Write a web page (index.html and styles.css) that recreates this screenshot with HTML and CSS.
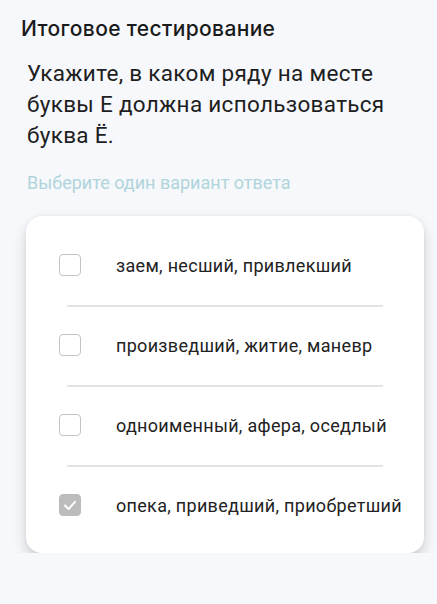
FILE: index.html
```html
<!DOCTYPE html>
<html lang="ru">
<head>
    <meta charset="UTF-8">
    <meta name="viewport" content="width=device-width, initial-scale=1.0">
    <title>Итоговое тестирование</title>
    <link rel="stylesheet" href="styles.css">
</head>
<body>
    <div class="page">
        <h1 class="title">Итоговое тестирование</h1>
        <p class="question">Укажите, в каком ряду на месте буквы Е должна использоваться буква Ё.</p>
        <p class="hint">Выберите один вариант ответа</p>

        <div class="card">
            <label class="option">
                <span class="box"></span>
                <span class="text">заем, несший, привлекший</span>
            </label>
            <label class="option">
                <span class="box"></span>
                <span class="text">произведший, житие, маневр</span>
            </label>
            <label class="option">
                <span class="box"></span>
                <span class="text">одноименный, афера, оседлый</span>
            </label>
            <label class="option">
                <span class="box checked">
                    <svg viewBox="0 0 22 22" width="22" height="22">
                        <path d="M5.5 11.5 L9.5 15.5 L16.5 7.5" fill="none" stroke="#fff" stroke-width="2.2" stroke-linecap="round" stroke-linejoin="round"/>
                    </svg>
                </span>
                <span class="text">опека, приведший, приобретший</span>
            </label>
        </div>
    </div>
</body>
</html>
```

FILE: styles.css
```css
* {
    box-sizing: border-box;
}

body {
    margin: 0;
    background: #f6f8fc;
    font-family: Roboto, "Noto Sans", sans-serif;
    color: #1c1c1c;
}

.page {
    padding: 15px 13px 0 21px;
}

.title {
    margin: 0;
    font-family: Inter, Roboto, sans-serif;
    font-size: 21px;
    font-weight: 500;
    line-height: 28px;
    letter-spacing: 0.35px;
    color: #1a1a1a;
}

.question {
    margin: 15px 0 0 6px;
    font-size: 22.5px;
    line-height: 31px;
    letter-spacing: 0.3px;
    color: #1e1e1e;
}

.hint {
    margin: 21px 0 0 6px;
    font-size: 18px;
    line-height: 22px;
    color: #b0d5db;
}

.card {
    margin: 22px 0 0 5px;
    background: #fff;
    border-radius: 16px;
    padding: 9px 0 8px;
    box-shadow: 0 8px 14px rgba(0, 0, 0, 0.16), 0 0 4px rgba(0, 0, 0, 0.06);
}

.option {
    display: flex;
    align-items: center;
    height: 80px;
    padding-left: 33px;
    position: relative;
}

.option + .option::before {
    content: "";
    position: absolute;
    top: 0;
    left: 41px;
    right: 41px;
    height: 2px;
    background: #e4e4e4;
}

.box {
    flex: none;
    width: 22px;
    height: 22px;
    border: 1px solid #c4c4c4;
    border-radius: 4px;
    background: #fff;
}

.box.checked {
    border-color: #bcbcbc;
    background: #bcbcbc;
    display: flex;
    align-items: center;
    justify-content: center;
}

.box.checked svg {
    display: block;
}

.text {
    margin-left: 35px;
    font-size: 18px;
    letter-spacing: 0.3px;
    color: #222;
}
```
